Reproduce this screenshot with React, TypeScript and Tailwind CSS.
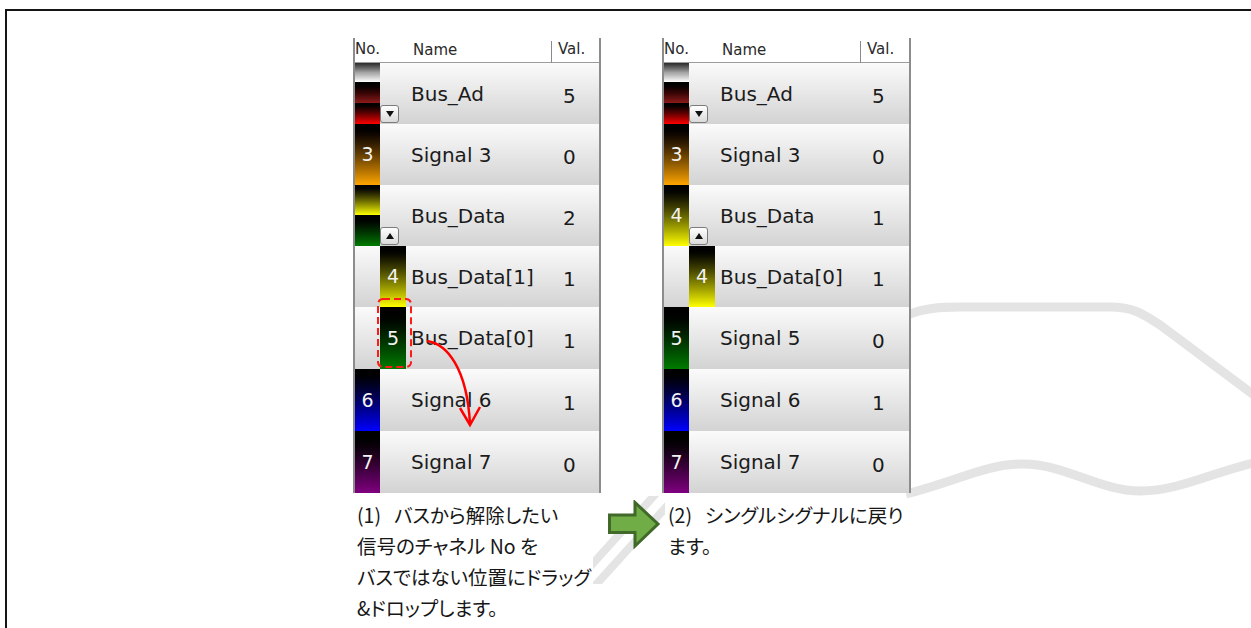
import React from 'react';

type Sub = { bg: string; num: string };
type Row = {
  name: string;
  val: string;
  h: string;
  main?: React.ReactNode;
  sub?: Sub;
  btn?: 'up' | 'down';
};

const digit = 'flex h-full w-full items-center justify-center text-[19px] text-[#f3f3f3]';

function Block({ bg, num }: { bg: string; num: string }) {
  return <div className={`${digit} ${bg}`}>{num}</div>;
}

const busAd = (
  <div className="flex h-full w-full flex-col">
    <div className="h-[19px] bg-linear-to-b from-[#2c2c2c] via-[#a3a3a3] to-white" />
    <div className="h-[21px] bg-linear-to-b from-black to-[#8e1b1b]" />
    <div className="flex-1 bg-linear-to-b from-black to-[#ff0000]" />
  </div>
);

const busDataSplit = (
  <div className="flex h-full w-full flex-col">
    <div className="h-[30px] bg-linear-to-b from-black to-[#ffff00]" />
    <div className="flex-1 bg-linear-to-b from-black to-[#007c00]" />
  </div>
);

const leftRows: Row[] = [
  { name: 'Bus_Ad', val: '5', h: 'h-[61px]', main: busAd, btn: 'down' },
  { name: 'Signal 3', val: '0', h: 'h-[61px]', main: <Block bg="bg-linear-to-b from-black to-[#ffa500]" num="3" /> },
  { name: 'Bus_Data', val: '2', h: 'h-[61px]', main: busDataSplit, btn: 'up' },
  { name: 'Bus_Data[1]', val: '1', h: 'h-[61px]', sub: { bg: 'bg-linear-to-b from-black to-[#ffff00]', num: '4' } },
  { name: 'Bus_Data[0]', val: '1', h: 'h-[62px]', sub: { bg: 'bg-linear-to-b from-black to-[#007c00]', num: '5' } },
  { name: 'Signal 6', val: '1', h: 'h-[62px]', main: <Block bg="bg-linear-to-b from-black to-[#0000ff]" num="6" /> },
  { name: 'Signal 7', val: '0', h: 'h-[62px]', main: <Block bg="bg-linear-to-b from-black to-[#800080]" num="7" /> },
];

const rightRows: Row[] = [
  { name: 'Bus_Ad', val: '5', h: 'h-[61px]', main: busAd, btn: 'down' },
  { name: 'Signal 3', val: '0', h: 'h-[61px]', main: <Block bg="bg-linear-to-b from-black to-[#ffa500]" num="3" /> },
  { name: 'Bus_Data', val: '1', h: 'h-[61px]', main: <Block bg="bg-linear-to-b from-black to-[#ffff00]" num="4" />, btn: 'up' },
  { name: 'Bus_Data[0]', val: '1', h: 'h-[61px]', sub: { bg: 'bg-linear-to-b from-black to-[#ffff00]', num: '4' } },
  { name: 'Signal 5', val: '0', h: 'h-[62px]', main: <Block bg="bg-linear-to-b from-black to-[#007c00]" num="5" /> },
  { name: 'Signal 6', val: '1', h: 'h-[62px]', main: <Block bg="bg-linear-to-b from-black to-[#0000ff]" num="6" /> },
  { name: 'Signal 7', val: '0', h: 'h-[62px]', main: <Block bg="bg-linear-to-b from-black to-[#800080]" num="7" /> },
];

function ToggleButton({ dir }: { dir: 'up' | 'down' }) {
  return (
    <div className="mb-[1px] flex h-[18px] w-[19px] items-center justify-center rounded-[3px] border border-[#7c7c7c] bg-linear-to-b from-white to-[#dadada]">
      <svg width="8" height="6" viewBox="0 0 8 6">
        {dir === 'down' ? <path d="M0 0 H8 L4 6 Z" fill="#111" /> : <path d="M0 6 H8 L4 0 Z" fill="#111" />}
      </svg>
    </div>
  );
}

function Panel({ rows, children }: { rows: Row[]; children?: React.ReactNode }) {
  return (
    <div className="relative w-full border-r-2 border-l-2 border-[#8c8c8c] font-['DejaVu_Sans',sans-serif] text-[#1b1b1b]">
      <div className="flex h-[25px] items-center border-b border-[#9c9c9c] bg-white pb-[2px] text-[15px] text-[#2a2a2a]">
        <div className="w-[51px]">No.</div>
        <div className="mt-[5px] flex h-[22px] w-[146px] items-center border-r border-[#8a8a8a] pb-[3px] pl-[7px]">Name</div>
        <div className="pl-[6px]">Val.</div>
      </div>
      {rows.map((r, i) => (
        <div key={i} className={`flex ${r.h} bg-linear-to-b from-[#fbfbfb] to-[#d3d3d3]`}>
          <div className="w-[25px]">{r.main}</div>
          <div className="flex w-[26px] items-end">
            {r.btn && <ToggleButton dir={r.btn} />}
            {r.sub && <Block bg={r.sub.bg} num={r.sub.num} />}
          </div>
          <div className="flex w-[146px] items-center pl-[5px] text-[20px] whitespace-nowrap">{r.name}</div>
          <div className="flex flex-1 items-center pt-[5px] pl-[11px] text-[20px]">{r.val}</div>
        </div>
      ))}
      {children}
    </div>
  );
}

function Backdrop() {
  return (
    <svg className="pointer-events-none absolute inset-0" width="1251" height="628" viewBox="0 0 1251 628">
      <defs>
        <clipPath id="gap">
          <rect x="593" y="496" width="72" height="88" />
        </clipPath>
      </defs>
      <g fill="none" stroke="#e4e4e4" strokeWidth="9">
        <path d="M 908 315 C 922 308, 940 307, 960 307 L 1110 307 C 1132 307, 1142 313, 1160 325 L 1258 398" />
        <path d="M 906 494 C 958 481, 985 464, 1023 464 C 1065 464, 1100 491, 1140 491 C 1180 491, 1215 471, 1258 462" />
        <g clipPath="url(#gap)" strokeWidth="8">
          <path d="M 560 600 L 670 478" />
          <path d="M 575 608 L 685 486" />
        </g>
      </g>
    </svg>
  );
}

const caption = "font-['Noto_Sans_CJK_JP',sans-serif] text-[19.5px] leading-[31px] whitespace-nowrap text-[#161616] [font-feature-settings:'palt']";

export default function App() {
  return (
    <div className="relative h-[628px] w-[1251px] overflow-hidden bg-white">
      <Backdrop />
      <div className="relative h-full pt-[9px] pl-[5px]">
        <div className="h-full border-t-2 border-l-2 border-[#151515]">
          <div className="mt-[27px] ml-[346px] grid grid-cols-[248px_61px_249px]">
            <Panel rows={leftRows}>
              <svg className="pointer-events-none absolute top-0 left-0" width="248" height="456" viewBox="0 0 248 456">
                <rect x="23" y="261" width="33" height="68" rx="5" fill="none" stroke="#ff1a1a" strokeWidth="2" strokeDasharray="7 4" />
                <path d="M 72 303 C 92 306, 112 330, 115 386" fill="none" stroke="#ff0000" strokeWidth="2.5" />
                <path d="M 105 370 L 115 387 L 125 369" fill="none" stroke="#ff0000" strokeWidth="2.5" />
              </svg>
            </Panel>
            <div />
            <Panel rows={rightRows} />

            <div className={`mt-[6px] pl-[4px] ${caption}`}>
              (1)<span className="inline-block w-[13px]" />バスから解除したい<br />
              信号のチャネル No を<br />
              バスではない位置にドラッグ<br />
              &amp;ドロップします。
            </div>
            <div className="mt-[7px] pl-[6px]">
              <svg width="54" height="50" viewBox="0 0 54 50">
                <path d="M 2.5 15 L 28 15 L 28 2.5 L 51 24 L 28 46 L 28 32.5 L 2.5 32.5 Z" fill="#70ad47" stroke="#41692a" strokeWidth="3" />
              </svg>
            </div>
            <div className={`mt-[6px] pl-[6px] ${caption}`}>
              (2)<span className="inline-block w-[13px]" />シングルシグナルに戻り<br />
              ます。
            </div>
          </div>
        </div>
      </div>
    </div>
  );
}
